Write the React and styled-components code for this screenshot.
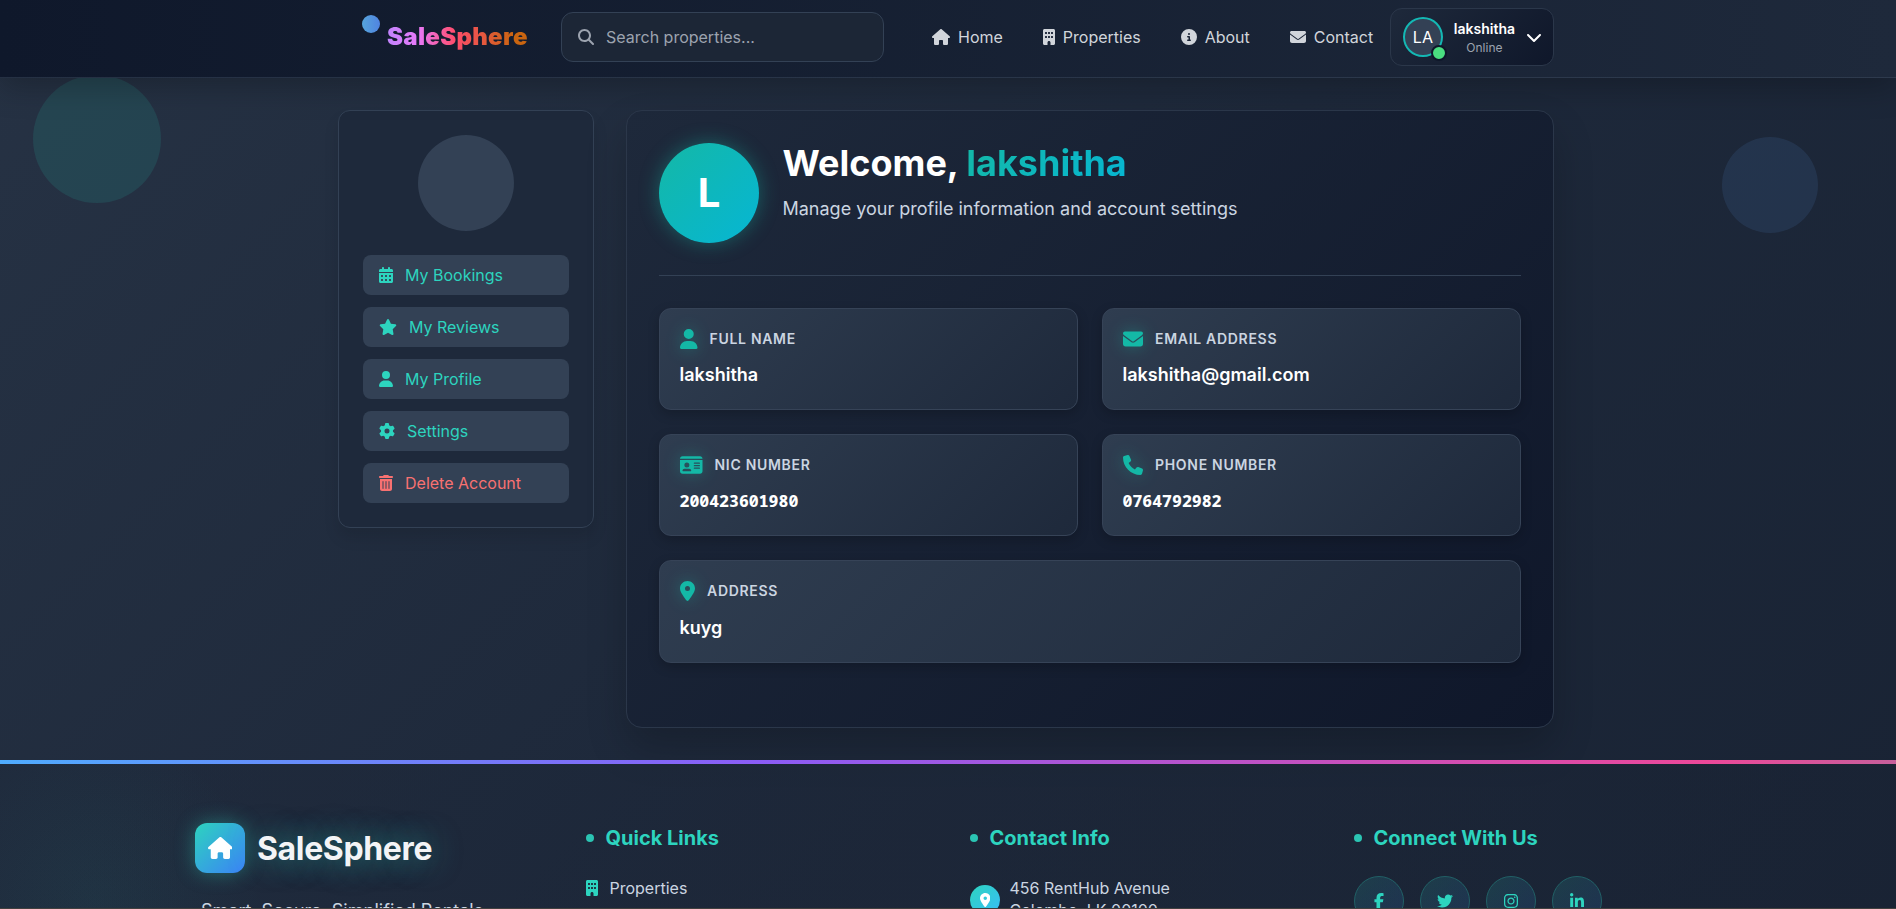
import React from "react";
import styled, { createGlobalStyle, css } from "styled-components";
import {
  FaHouse, FaBuilding, FaCircleInfo, FaEnvelope, FaMagnifyingGlass, FaChevronDown,
  FaCalendarDays, FaStar, FaUser, FaGear, FaTrashCan, FaIdCard, FaPhone,
  FaLocationDot, FaFacebookF, FaTwitter, FaInstagram, FaLinkedinIn,
} from "react-icons/fa6";

const Global = createGlobalStyle`
  * { box-sizing: border-box; }
  html, body { margin: 0; height: 909px; overflow: hidden; }
  body { font-family: Inter, "Liberation Sans", sans-serif; font-size: 16px; line-height: 24px; color: #fff; background: #1e293b; }
  h1, h2, h3, p { margin: 0; }
`;

const Page = styled.div`
  position: relative;
  height: 909px;
  overflow: hidden;
  display: flex;
  flex-direction: column;
  background: linear-gradient(135deg, #263244 0%, #1e293b 50%, #192334 100%);
`;

const GlyphBox = styled.span`
  flex: none;
  display: block;
  width: ${(p) => p.$width}px;
  height: ${(p) => p.$height}px;
  svg {
    display: block;
    width: 100%;
    height: 100%;
  }
`;

const Header = styled.header`
  position: relative;
  z-index: 2;
  flex: none;
  height: 78px;
  border-bottom: 1px solid rgba(71, 85, 105, 0.4);
  background: linear-gradient(90deg, #0f182b 0%, #1e293b 100%);
  box-shadow: 0 8px 32px rgba(0, 0, 0, 0.25);
`;

const HeaderInner = styled.div`
  width: 1216px;
  height: 74px;
  margin-left: 338px;
  display: flex;
  align-items: center;
`;

const Brand = styled.div`
  position: relative;
  width: 223px;
  padding-left: 49px;
  font-size: 24px;
  line-height: 32px;
  font-weight: 900;
  letter-spacing: 0.3px;
`;

const BrandText = styled.span`
  background: linear-gradient(90deg, #c084fc, #e879f9 22%, #ff4d6d 48%, #ef5350 60%, #ca6510 90%, #ca6510);
  background-clip: text;
  color: transparent;
`;

const BrandDot = styled.span`
  position: absolute;
  left: 24px;
  top: -6px;
  width: 18px;
  height: 18px;
  border-radius: 50%;
  background: linear-gradient(90deg, #56a5dc, #5083e0);
`;

const Search = styled.div`
  width: 323px;
  height: 50px;
  padding-left: 16px;
  display: flex;
  align-items: center;
  gap: 12px;
  border: 1px solid #334155;
  border-radius: 12px;
  background: #1c2636;
  color: #9ca3af;
`;

const Nav = styled.nav`
  display: flex;
  gap: 40px;
  margin-left: 48px;
  color: #d1d5db;
`;

const NavItem = styled.a`
  display: flex;
  align-items: center;
  gap: 8px;
`;

const UserBox = styled.div`
  width: 164px;
  height: 58px;
  margin-left: auto;
  padding: 0 11px 0 12px;
  display: flex;
  align-items: center;
  border: 1px solid #2b374a;
  border-radius: 12px;
  background: linear-gradient(135deg, #1e293b, #0f172a);
`;

const UserAvatar = styled.div`
  position: relative;
  width: 40px;
  height: 40px;
  display: grid;
  place-items: center;
  border: 2px solid #14b8b4;
  border-radius: 50%;
  background: #334155;
`;

const OnlineDot = styled.span`
  position: absolute;
  right: -6px;
  bottom: -6px;
  width: 16px;
  height: 16px;
  border: 2px solid #0f172a;
  border-radius: 50%;
  background: #4ade80;
`;

const UserText = styled.div`
  flex: 1;
  padding: 0 11px 0 11px;
  text-align: center;
`;

const UserName = styled.div`
  font-size: 14px;
  line-height: 20px;
  font-weight: 600;
`;

const UserStatus = styled.div`
  font-size: 12px;
  line-height: 16px;
  margin-top: 1px;
  color: #9ca3af;
`;

const Orb = styled.span`
  position: absolute;
  left: ${(p) => p.$x}px;
  top: ${(p) => p.$y}px;
  width: ${(p) => p.$size}px;
  height: ${(p) => p.$size}px;
  border-radius: 50%;
  background: ${(p) => p.$color};
`;

const Main = styled.main`
  position: relative;
  flex: none;
  display: flex;
  align-items: flex-start;
  gap: 32px;
  width: 1216px;
  margin: 32px 0 32px 338px;
`;

const Sidebar = styled.aside`
  width: 256px;
  height: 418px;
  padding: 24px;
  display: flex;
  flex-direction: column;
  align-items: center;
  gap: 12px;
  border: 1px solid #334155;
  border-radius: 12px;
  background: #1e293b;
  box-shadow: 0 10px 15px rgba(0, 0, 0, 0.1);
`;

const PhotoCircle = styled.div`
  width: 96px;
  height: 96px;
  margin-bottom: 12px;
  border-radius: 50%;
  background: #334155;
`;

const SideButton = styled.a`
  width: 100%;
  height: 40px;
  padding: 0 16px;
  display: flex;
  align-items: center;
  gap: 12px;
  border-radius: 8px;
  background: #334155;
  color: ${(p) => (p.$danger ? "#f87171" : "#2dd4bf")};
`;

const Panel = styled.section`
  flex: 1;
  height: 618px;
  padding: 32px;
  border: 1px solid #2b374a;
  border-radius: 16px;
  background: linear-gradient(135deg, #1e293b 0%, #0f172a 100%);
  box-shadow: 0 20px 40px rgba(0, 0, 0, 0.2);
`;

const PanelHeader = styled.div`
  display: flex;
  gap: 23.5px;
  height: 133px;
  margin-bottom: 32px;
  border-bottom: 1px solid #334155;
`;

const BigAvatar = styled.div`
  width: 100px;
  height: 100px;
  display: grid;
  place-items: center;
  border-radius: 50%;
  background: linear-gradient(135deg, #14b8a6, #06b6d4);
  box-shadow: 0 0 20px rgba(20, 184, 166, 0.4);
  font-size: 40px;
  font-weight: 700;
`;

const Title = styled.h1`
  margin-top: -4px;
  font-size: 36px;
  line-height: 48px;
  font-weight: 700;
`;

const TitleName = styled.span`
  background: linear-gradient(135deg, #14b8a6, #06b6d4);
  background-clip: text;
  color: transparent;
`;

const Subtitle = styled.p`
  margin-top: 8px;
  font-size: 18px;
  line-height: 28px;
  color: #cbd5e1;
`;

const CardGrid = styled.div`
  display: grid;
  grid-template-columns: 1fr 1fr;
  gap: 24px;
`;

const Card = styled.div`
  height: 102px;
  padding: 19px 20px;
  border: 1px solid #364357;
  border-radius: 12px;
  background: linear-gradient(135deg, #2f3d50 0%, #1e293b 100%);
  box-shadow: 0 4px 12px rgba(0, 0, 0, 0.2);
  ${(p) => p.$wide && css`
    grid-column: 1 / -1;
    height: 103px;
  `}
`;

const CardLabel = styled.div`
  display: flex;
  align-items: center;
  gap: 12px;
  height: 22px;
  font-size: 14px;
  font-weight: 600;
  letter-spacing: 0.7px;
  color: #cbd5e1;
  svg { color: #14b8a6; filter: drop-shadow(0 0 8px rgba(20, 184, 166, 0.4)); }
`;

const CardValue = styled.div`
  margin: ${(p) => (p.$low ? 12 : 11)}px 0 0 -0.5px;
  font-size: 18px;
  line-height: 28px;
  font-weight: 600;
  ${(p) => p.$mono && css`
    font-family: "Noto Sans Mono", "DejaVu Sans Mono", monospace;
    font-size: 16.5px;
    font-weight: 800;
  `}
`;

const Footer = styled.footer`
  position: relative;
  flex: 1;
  background:
    radial-gradient(circle at 95px 140px, rgba(45, 212, 191, 0.05), transparent 170px),
    linear-gradient(90deg, rgba(30, 41, 59, 0.5), rgba(26, 35, 52, 0.5));
`;

const Stripe = styled.div`
  height: 4px;
  background: linear-gradient(90deg, #4facfe 0%, #8b5cf6 40%, #ec4899 90%, #c75f9b 100%);
`;

const FooterGrid = styled.div`
  width: 1488px;
  margin-left: 202px;
  padding-top: 60px;
  display: grid;
  grid-template-columns: repeat(4, 336px);
  gap: 48px;
`;

const FooterBrand = styled.div`
  display: flex;
  align-items: center;
  gap: 12px;
  height: 50px;
  margin: -1px 0 24px -7px;
  font-size: 32px;
  font-weight: 700;
  letter-spacing: -0.35px;
  color: #f3f4f6;
  text-shadow: 0 0 30px rgba(45, 212, 191, 0.6);
`;

const FooterBrandName = styled.span`
  padding-top: 2px;
`;

const FooterLogo = styled.div`
  width: 50px;
  height: 50px;
  display: grid;
  place-items: center;
  border-radius: 12px;
  background: linear-gradient(135deg, #2dd4bf, #3b82f6);
  box-shadow: 0 0 20px rgba(45, 212, 191, 0.4);
  color: #fff;
`;

const Tagline = styled.p`
  margin-left: -1px;
  font-size: 18px;
  line-height: 28px;
  white-space: nowrap;
  color: #cbd5e1;
`;

const FooterTitle = styled.h3`
  display: flex;
  align-items: center;
  gap: 11.5px;
  height: 28px;
  margin-bottom: 24px;
  font-size: 20px;
  font-weight: 700;
  color: #2dd4bf;
  &::before {
    content: "";
    width: 8px;
    height: 8px;
    border-radius: 50%;
    background: #2bc4b3;
  }
`;

const FooterLink = styled.a`
  display: flex;
  align-items: center;
  gap: 11.5px;
  color: #cbd5e1;
  svg { color: #2dd4bf; }
`;

const ContactRow = styled.div`
  display: flex;
  gap: 9.5px;
  padding-top: 1px;
  line-height: 22px;
  color: #cbd5e1;
`;

const ContactIcon = styled.div`
  width: 30px;
  height: 30px;
  margin-top: 8px;
  display: grid;
  place-items: center;
  border-radius: 50%;
  background: linear-gradient(135deg, #2dd4bf, #38bdf8);
  color: #fff;
`;

const Socials = styled.div`
  display: flex;
  gap: 16px;
`;

const Social = styled.a`
  width: 50px;
  height: 50px;
  display: grid;
  place-items: center;
  border: 1px solid #216066;
  border-radius: 50%;
  background: linear-gradient(135deg, rgba(45, 212, 191, 0.14), rgba(59, 130, 246, 0.14));
  color: #2dd4bf;
`;

const BottomEdge = styled.div`
  position: absolute;
  left: 0;
  right: 0;
  bottom: 0;
  height: 1px;
  background: #41403f;
`;

const sideItems = [
  [FaCalendarDays, "My Bookings"],
  [FaStar, "My Reviews"],
  [FaUser, "My Profile"],
  [FaGear, "Settings"],
  [FaTrashCan, "Delete Account", true],
];

const navItems = [
  [FaHouse, "Home"],
  [FaBuilding, "Properties"],
  [FaCircleInfo, "About"],
  [FaEnvelope, "Contact"],
];

const details = [
  { icon: FaUser, label: "FULL NAME", value: "lakshitha" },
  { icon: FaEnvelope, label: "EMAIL ADDRESS", value: "lakshitha@gmail.com" },
  { icon: FaIdCard, label: "NIC NUMBER", value: "200423601980", mono: true },
  { icon: FaPhone, label: "PHONE NUMBER", value: "0764792982", mono: true },
  { icon: FaLocationDot, label: "ADDRESS", value: "kuyg", wide: true },
];

/* Font Awesome glyphs differ in width; these are the ones that are not 512 units wide. */
const glyphUnits = new Map([
  [FaHouse, 576], [FaStar, 576], [FaIdCard, 576],
  [FaCalendarDays, 448], [FaUser, 448], [FaTrashCan, 448], [FaInstagram, 448], [FaLinkedinIn, 448],
  [FaBuilding, 384], [FaLocationDot, 384], [FaFacebookF, 320],
]);

const Glyph = ({ icon: Icon, size = 16 }) => (
  <GlyphBox $width={(size * (glyphUnits.get(Icon) ?? 512)) / 512} $height={size}>
    <Icon />
  </GlyphBox>
);

export default function App() {
  return (
    <>
      <Global />
      <Page>
        <Orb $x={33} $y={75} $size={128} $color="rgba(45, 212, 191, 0.12)" />
        <Orb $x={1722} $y={137} $size={96} $color="rgba(96, 165, 250, 0.11)" />
        <Header>
          <HeaderInner>
            <Brand><BrandDot /><BrandText>SaleSphere</BrandText></Brand>
            <Search><Glyph icon={FaMagnifyingGlass} />Search properties...</Search>
            <Nav>
              {navItems.map(([icon, label]) => (
                <NavItem key={label}><Glyph icon={icon} />{label}</NavItem>
              ))}
            </Nav>
            <UserBox>
              <UserAvatar>LA<OnlineDot /></UserAvatar>
              <UserText>
                <UserName>lakshitha</UserName>
                <UserStatus>Online</UserStatus>
              </UserText>
              <Glyph icon={FaChevronDown} size={16} />
            </UserBox>
          </HeaderInner>
        </Header>
        <Main>
          <Sidebar>
            <PhotoCircle />
            {sideItems.map(([icon, label, danger]) => (
              <SideButton key={label} $danger={danger}><Glyph icon={icon} />{label}</SideButton>
            ))}
          </Sidebar>
          <Panel>
            <PanelHeader>
              <BigAvatar>L</BigAvatar>
              <div>
                <Title>Welcome, <TitleName>lakshitha</TitleName></Title>
                <Subtitle>Manage your profile information and account settings</Subtitle>
              </div>
            </PanelHeader>
            <CardGrid>
              {details.map((d) => (
                <Card key={d.label} $wide={d.wide}>
                  <CardLabel><Glyph icon={d.icon} size={20} />{d.label}</CardLabel>
                  <CardValue $mono={d.mono} $low={d.wide}>{d.value}</CardValue>
                </Card>
              ))}
            </CardGrid>
          </Panel>
        </Main>
        <Footer>
          <Stripe />
          <FooterGrid>
            <div>
              <FooterBrand>
                <FooterLogo><Glyph icon={FaHouse} size={22} /></FooterLogo>
                <FooterBrandName>SaleSphere</FooterBrandName>
              </FooterBrand>
              <Tagline>Smart. Secure. Simplified Rentals.</Tagline>
            </div>
            <div>
              <FooterTitle>Quick Links</FooterTitle>
              <FooterLink><Glyph icon={FaBuilding} />Properties</FooterLink>
            </div>
            <div>
              <FooterTitle>Contact Info</FooterTitle>
              <ContactRow>
                <ContactIcon><Glyph icon={FaLocationDot} size={14} /></ContactIcon>
                <div>456 RentHub Avenue<br />Colombo, LK 00100</div>
              </ContactRow>
            </div>
            <div>
              <FooterTitle>Connect With Us</FooterTitle>
              <Socials>
                {[FaFacebookF, FaTwitter, FaInstagram, FaLinkedinIn].map((icon, i) => (
                  <Social key={i}><Glyph icon={icon} /></Social>
                ))}
              </Socials>
            </div>
          </FooterGrid>
        </Footer>
        <BottomEdge />
      </Page>
    </>
  );
}
